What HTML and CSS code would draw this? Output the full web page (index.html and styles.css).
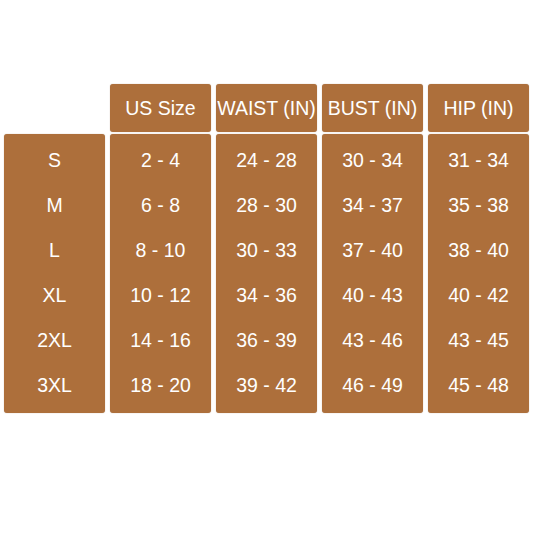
FILE: index.html
```html
<!DOCTYPE html>
<html>
<head>
<meta charset="utf-8">
<link rel="stylesheet" href="styles.css">
</head>
<body>
<div class="chart">
  <div class="blank"></div>
  <div class="head">US Size</div>
  <div class="head">WAIST (IN)</div>
  <div class="head">BUST (IN)</div>
  <div class="head">HIP (IN)</div>

  <div class="col"><span>S</span><span>M</span><span>L</span><span>XL</span><span>2XL</span><span>3XL</span></div>
  <div class="col"><span>2 - 4</span><span>6 - 8</span><span>8 - 10</span><span>10 - 12</span><span>14 - 16</span><span>18 - 20</span></div>
  <div class="col"><span>24 - 28</span><span>28 - 30</span><span>30 - 33</span><span>34 - 36</span><span>36 - 39</span><span>39 - 42</span></div>
  <div class="col"><span>30 - 34</span><span>34 - 37</span><span>37 - 40</span><span>40 - 43</span><span>43 - 46</span><span>46 - 49</span></div>
  <div class="col"><span>31 - 34</span><span>35 - 38</span><span>38 - 40</span><span>40 - 42</span><span>43 - 45</span><span>45 - 48</span></div>
</div>
</body>
</html>
```
FILE: styles.css
```css
html, body {
  margin: 0;
  padding: 0;
  background: #ffffff;
}
body {
  width: 533px;
  height: 533px;
  overflow: hidden;
  font-family: "Liberation Sans", Arial, sans-serif;
  color: #ffffff;
}
.chart {
  display: grid;
  grid-template-columns: 101px 101px 101px 101px 101px;
  grid-template-rows: 48px 279px;
  column-gap: 5px;
  row-gap: 2px;
  padding: 84px 0 0 4px;
}
.head, .col {
  background: #ad6f3b;
  border-radius: 3px;
  box-shadow: 0 0 1px rgba(120, 70, 30, 0.5);
}
.head {
  display: flex;
  align-items: center;
  justify-content: center;
  font-size: 19.5px;
  white-space: nowrap;
}
.col {
  display: flex;
  flex-direction: column;
  align-items: center;
  padding-top: 4px;
  font-size: 19.5px;
  line-height: 45px;
  white-space: nowrap;
}
```
